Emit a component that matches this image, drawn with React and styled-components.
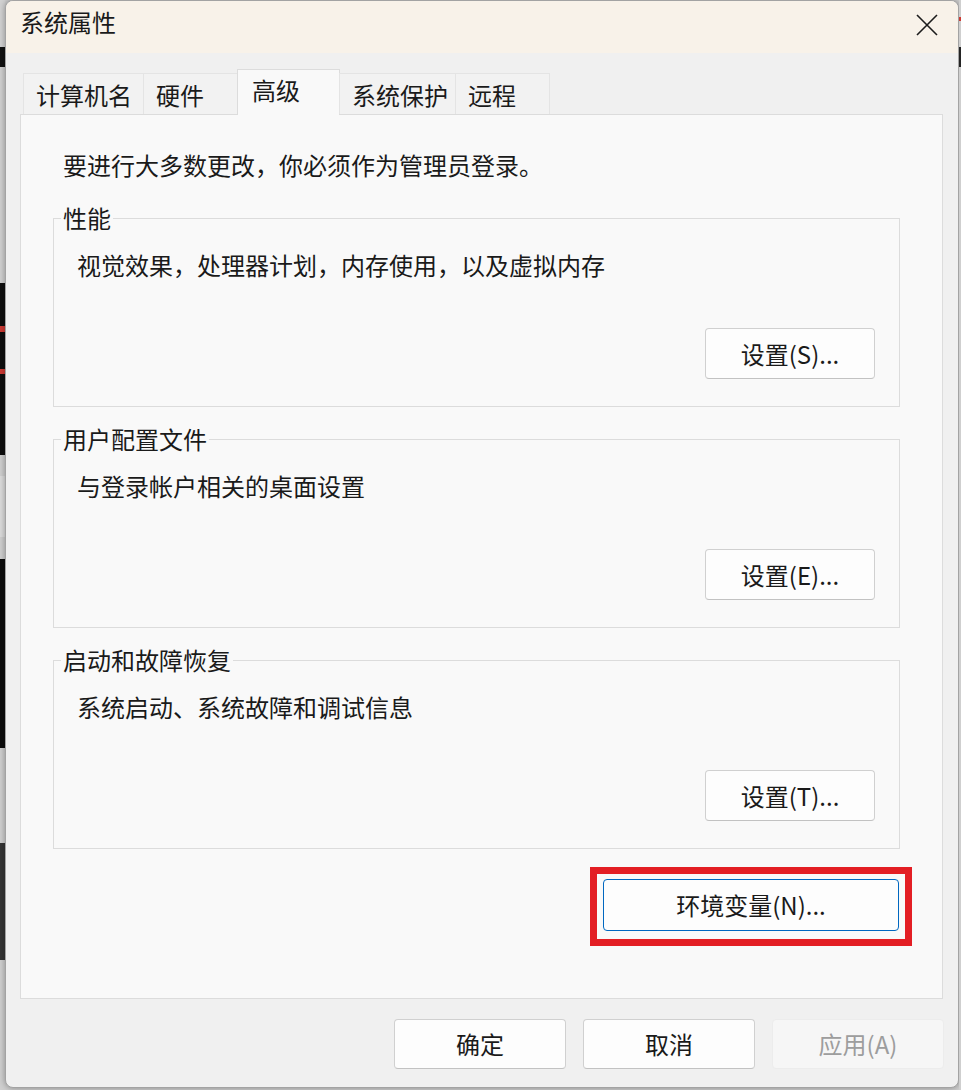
import React from "react";
import styled, { createGlobalStyle } from "styled-components";

const GlobalStyle = createGlobalStyle`
  html, body {
    margin: 0;
    padding: 0;
    background: #cfcfcf;
  }
  body {
    font-family: "Noto Sans CJK SC", "Microsoft YaHei UI", sans-serif;
    color: #1a1a1a;
  }
`;

const Page = styled.div`
  display: flex;
  width: 961px;
  height: 1090px;
  overflow: hidden;
  background: #cfcfcf;
`;

// bits of the desktop peeking out beside the dialog
const Strip = styled.div`
  width: ${(p) => p.$w}px;
  flex: none;
  display: flex;
  flex-direction: column;
`;

const StripBlock = styled.div`
  flex: none;
  height: ${(p) => p.$h}px;
  background: ${(p) => p.$c};
`;

const Window = styled.div`
  width: 954px;
  height: 1088px;
  flex: none;
  box-sizing: border-box;
  border: 1px solid #a3a3a3;
  border-radius: 8px;
  overflow: hidden;
  background: #f0f0f0;
  display: flex;
  flex-direction: column;
  box-shadow: 0 0 6px rgba(0, 0, 0, 0.35);
`;

const TitleBar = styled.div`
  height: 52px;
  flex: none;
  display: flex;
  align-items: flex-start;
  justify-content: space-between;
  background: #f8f2e9;
`;

const Title = styled.div`
  padding: 5px 0 0 14px;
  font-size: 24px;
  line-height: 32px;
`;

const CloseButton = styled.div`
  width: 62px;
  height: 48px;
  display: flex;
  align-items: center;
  justify-content: center;
`;

const Body = styled.div`
  flex: 1;
  display: flex;
  flex-direction: column;
  padding: 16px 14px 0 14px;
`;

const TabRow = styled.div`
  display: flex;
  align-items: flex-end;
  height: 45px;
  padding-left: 3px;
  position: relative;
  z-index: 1;
`;

const Tab = styled.div`
  width: ${(p) => p.$w}px;
  height: ${(p) => (p.$active ? 46 : 41)}px;
  margin-bottom: ${(p) => (p.$active ? -1 : 0)}px;
  margin-left: -1px;
  box-sizing: border-box;
  display: flex;
  align-items: center;
  padding: ${(p) => (p.$active ? "0 0 6px 14px" : "2px 0 0 12px")};
  border: 1px solid ${(p) => (p.$active ? "#dcdcdc" : "#e4e4e4")};
  border-bottom: none;
  background: ${(p) => (p.$active ? "#f9f9f9" : "#f2f2f2")};
  font-size: 24px;
  line-height: 32px;
  white-space: nowrap;
  &:first-child {
    margin-left: 0;
  }
`;

const Panel = styled.div`
  height: 885px;
  width: 923px;
  flex: none;
  box-sizing: border-box;
  border: 1px solid #dcdcdc;
  background: #f9f9f9;
  padding: 34px 42px 0 32px;
  display: flex;
  flex-direction: column;
`;

const Notice = styled.div`
  margin-left: 10px;
  font-size: 24px;
  line-height: 32px;
`;

const Group = styled.fieldset`
  margin: ${(p) => (p.$first ? 25 : 20)}px 0 0;
  padding: 0 24px 27px 7px;
  min-width: 0;
  border: 1px solid #dcdcdc;
`;

const GroupLabel = styled.legend`
  padding: 0 2px;
  font-size: 24px;
  line-height: 24px;
`;

const GroupBody = styled.div`
  display: flex;
  flex-direction: column;
  margin-left: 16px;
`;

const GroupText = styled.div`
  margin-top: 19px;
  font-size: 24px;
  line-height: 32px;
`;

const Button = styled.button`
  width: ${(p) => p.$w}px;
  height: ${(p) => p.$h}px;
  flex: none;
  box-sizing: border-box;
  display: flex;
  align-items: center;
  justify-content: center;
  padding: 0;
  border-radius: 4px;
  border: 1px solid ${(p) => (p.$focus ? "#0067c0" : p.disabled ? "#ececec" : "#d0d0d0")};
  border-bottom-color: ${(p) => (p.$focus ? "#0067c0" : p.disabled ? "#ececec" : "#c2c2c2")};
  background: ${(p) => (p.disabled ? "#f6f6f6" : "#fdfdfd")};
  color: ${(p) => (p.disabled ? "#9d9d9d" : "#1a1a1a")};
  font-family: inherit;
  font-size: 24px;
  line-height: 32px;
`;

const GroupButton = styled(Button)`
  align-self: flex-end;
  margin-top: 47px;
`;

const Highlight = styled.div`
  align-self: flex-end;
  margin: 18px -12px 0 0;
  padding: 5px 6px 8px;
  border: 7px solid #e31e24;
`;

const Footer = styled.div`
  display: flex;
  justify-content: flex-end;
  gap: 17px;
  margin-top: 20px;
`;

const leftStrip = [
  [47, "#d2d2d2"],
  [20, "#121212"],
  [216, "#d0d0d0"],
  [43, "#0e0e0e"],
  [6, "#cc3a33"],
  [37, "#0e0e0e"],
  [5, "#cc3a33"],
  [81, "#0e0e0e"],
  [21, "#cfcfcf"],
  [61, "#dcdcdc"],
  [22, "#cfcfcf"],
  [189, "#0c0c0c"],
  [95, "#cfcfcf"],
  [117, "#343434"],
  [130, "#cfcfcf"],
];

const rightStrip = [
  [17, "#cfcfcf"],
  [4, "#cc3a33"],
  [26, "#cfcfcf"],
  [20, "#242424"],
  [1023, "#cfcfcf"],
];

const tabs = [
  { label: "计算机名", w: 121 },
  { label: "硬件", w: 95 },
  { label: "高级", w: 103, active: true },
  { label: "系统保护", w: 117 },
  { label: "远程", w: 95 },
];

const groups = [
  { label: "性能", text: "视觉效果，处理器计划，内存使用，以及虚拟内存", button: "设置(S)..." },
  { label: "用户配置文件", text: "与登录帐户相关的桌面设置", button: "设置(E)..." },
  { label: "启动和故障恢复", text: "系统启动、系统故障和调试信息", button: "设置(T)..." },
];

function CloseIcon() {
  return (
    <svg width="22" height="22" viewBox="0 0 22 22">
      <path d="M1 1 L21 21 M21 1 L1 21" stroke="#1c1c1c" strokeWidth="1.6" fill="none" />
    </svg>
  );
}

export default function App() {
  return (
    <>
      <GlobalStyle />
      <Page>
        <Strip $w={5}>
          {leftStrip.map(([h, c], i) => (
            <StripBlock key={i} $h={h} $c={c} />
          ))}
        </Strip>
        <Window>
          <TitleBar>
            <Title>系统属性</Title>
            <CloseButton>
              <CloseIcon />
            </CloseButton>
          </TitleBar>
          <Body>
            <TabRow>
              {tabs.map((t) => (
                <Tab key={t.label} $w={t.w} $active={t.active}>
                  {t.label}
                </Tab>
              ))}
            </TabRow>
            <Panel>
              <Notice>要进行大多数更改，你必须作为管理员登录。</Notice>
              {groups.map((g, i) => (
                <Group key={g.label} $first={i === 0}>
                  <GroupLabel>{g.label}</GroupLabel>
                  <GroupBody>
                    <GroupText>{g.text}</GroupText>
                    <GroupButton $w={170} $h={51}>
                      {g.button}
                    </GroupButton>
                  </GroupBody>
                </Group>
              ))}
              <Highlight>
                <Button $w={296} $h={52} $focus>
                  环境变量(N)...
                </Button>
              </Highlight>
            </Panel>
            <Footer>
              <Button $w={172} $h={50}>确定</Button>
              <Button $w={172} $h={50}>取消</Button>
              <Button $w={172} $h={50} disabled>
                应用(A)
              </Button>
            </Footer>
          </Body>
        </Window>
        <Strip $w={2}>
          {rightStrip.map(([h, c], i) => (
            <StripBlock key={i} $h={h} $c={c} />
          ))}
        </Strip>
      </Page>
    </>
  );
}
